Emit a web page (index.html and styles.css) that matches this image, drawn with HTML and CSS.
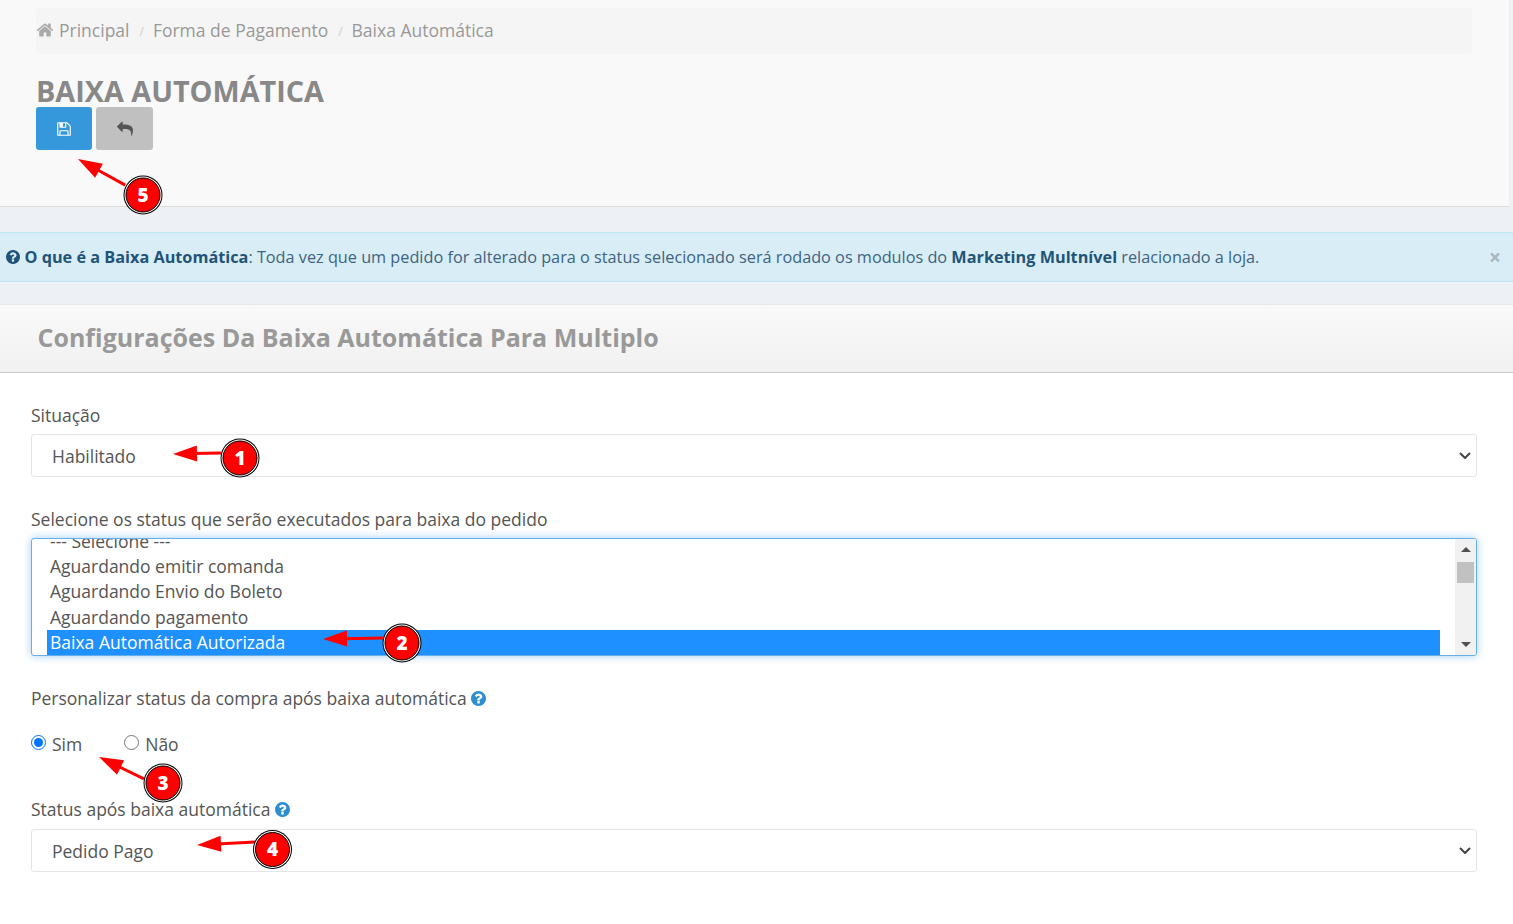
FILE: index.html
```html
<!DOCTYPE html>
<html lang="pt-BR">
<head>
<meta charset="utf-8">
<title>Baixa Automática</title>
<link rel="stylesheet" href="styles.css">
</head>
<body>
<svg class="sprite" width="0" height="0" aria-hidden="true">
  <symbol id="i-home" viewBox="0 0 1792 1792"><path d="M1472 992v480q0 26-19 45t-45 19h-384v-384h-256v384h-384q-26 0-45-19t-19-45v-480q0-1 .5-3t.5-3l575-474 575 474q1 2 1 6zm223-69l-62 74q-8 9-21 11h-3q-13 0-21-7l-692-577-692 577q-12 8-24 7-13-2-21-11l-62-74q-8-10-7-23.5t11-21.5l719-599q32-26 76-26t76 26l244 204v-195q0-14 9-23t23-9h192q14 0 23 9t9 23v408l219 182q10 8 11 21.5t-7 23.5z"/></symbol>
  <symbol id="i-save" viewBox="0 0 1792 1792"><path d="M512 1536h768v-384h-768v384zm896 0h128v-896q0-14-10-38.5t-20-34.5l-281-281q-10-10-34-20t-39-10v416q0 40-28 68t-68 28h-576q-40 0-68-28t-28-68v-416h-128v1280h128v-416q0-40 28-68t68-28h832q40 0 68 28t28 68v416zm-384-928v-320q0-13-9.5-22.5t-22.5-9.5h-192q-13 0-22.5 9.5t-9.5 22.5v320q0 13 9.5 22.5t22.5 9.5h192q13 0 22.5-9.5t9.5-22.5zm640 32v928q0 40-28 68t-68 28h-1344q-40 0-68-28t-28-68v-1344q0-40 28-68t68-28h928q40 0 88 20t76 48l280 280q28 28 48 76t20 88z"/></symbol>
  <symbol id="i-reply" viewBox="0 0 1792 1792"><path d="M1792 1120q0 166-127 451-3 7-10.5 24t-13.5 30-13 22q-12 17-28 17-15 0-23.5-10t-8.5-25q0-9 2.5-26.5t2.5-23.5q5-68 5-123 0-101-17.5-181t-48.5-138.5-80-101-105.5-69.5-133-42.5-154-21.5-175.5-6h-224v256q0 26-19 45t-45 19-45-19l-512-512q-19-19-19-45t19-45l512-512q19-19 45-19t45 19 19 45v256h224q713 0 875 403 53 134 53 333z"/></symbol>
  <symbol id="i-help" viewBox="128 128 1536 1536"><path d="M1024 1376v-192q0-14-9-23t-23-9h-192q-14 0-23 9t-9 23v192q0 14 9 23t23 9h192q14 0 23-9t9-23zm256-672q0-88-55.5-163t-138.5-116-170-41q-243 0-371 213-15 24 8 42l132 100q7 6 19 6 16 0 25-12 53-68 86-92 34-24 86-24 48 0 85.5 26t37.5 59q0 38-20 61t-68 45q-63 28-115.5 86.5t-52.5 125.5v36q0 14 9 23t23 9h192q14 0 23-9t9-23q0-19 21.5-49.5t54.5-49.5q32-18 49-28.5t46-35 44.5-48 28-60.5 12.5-81zm384 192q0 209-103 385.5t-279.5 279.5-385.5 103-385.5-103-279.5-279.5-103-385.5 103-385.5 279.5-279.5 385.5-103 385.5 103 279.5 279.5 103 385.5z"/></symbol>
</svg>

<header class="page-head">
  <nav class="breadcrumb">
    <svg class="icon-home"><use href="#i-home"/></svg>
    <span class="crumb">Principal</span>
    <span class="crumb-sep">/</span>
    <span class="crumb">Forma de Pagamento</span>
    <span class="crumb-sep">/</span>
    <span class="crumb">Baixa Automática</span>
  </nav>
  <h1 class="page-title">BAIXA AUTOMÁTICA</h1>
  <div class="actions">
    <button class="btn btn-save" type="button"><svg class="btn-icon"><use href="#i-save"/></svg></button>
    <button class="btn btn-back" type="button"><svg class="btn-icon"><use href="#i-reply"/></svg></button>
  </div>
</header>

<div class="alert">
  <svg class="alert-icon"><use href="#i-help"/></svg>
  <p class="alert-text"><strong>O que é a Baixa Automática</strong>: Toda vez que um pedido for alterado para o status selecionado será rodado os modulos do <strong>Marketing Multnível</strong> relacionado a loja.</p>
  <span class="alert-close">×</span>
</div>

<section class="panel">
  <div class="panel-heading"><h2 class="panel-title">Configurações Da Baixa Automática Para Multiplo</h2></div>
  <form class="panel-body">
    <div class="group group-situacao">
      <label class="field-label" for="situacao">Situação</label>
      <select class="field-select" id="situacao"><option>Habilitado</option><option>Desabilitado</option></select>
    </div>
    <div class="group group-status">
      <div class="field-label">Selecione os status que serão executados para baixa do pedido</div>
      <div class="listbox" role="listbox">
        <div class="list-options">
          <div class="list-option">--- Selecione ---</div>
          <div class="list-option">Aguardando emitir comanda</div>
          <div class="list-option">Aguardando Envio do Boleto</div>
          <div class="list-option">Aguardando pagamento</div>
          <div class="list-option is-selected">Baixa Automática Autorizada</div>
        </div>
        <div class="scrollbar">
          <span class="arrow-up"></span>
          <span class="thumb"></span>
          <span class="arrow-down"></span>
        </div>
      </div>
    </div>
    <div class="group group-custom">
      <div class="field-label">Personalizar status da compra após baixa automática <svg class="help"><use href="#i-help"/></svg></div>
      <div class="radios">
        <label class="radio"><input type="radio" name="custom" checked> Sim</label>
        <label class="radio"><input type="radio" name="custom"> Não</label>
      </div>
    </div>
    <div class="group group-after">
      <label class="field-label" for="apos">Status após baixa automática <svg class="help"><use href="#i-help"/></svg></label>
      <select class="field-select" id="apos"><option>Pedido Pago</option></select>
    </div>
  </form>
</section>

<svg class="annotations" width="1513" height="924" viewBox="0 0 1513 924">
  <g class="arrow" transform="translate(173 454) rotate(-1.2)"><line x1="20" y1="0" x2="48" y2="0"/><polygon points="0,0 24,-8 24,8"/></g>
  <g class="arrow" transform="translate(323 639) rotate(-1)"><line x1="20" y1="0" x2="60" y2="0"/><polygon points="0,0 24,-8 24,8"/></g>
  <g class="arrow" transform="translate(99 757) rotate(26)"><line x1="20" y1="0" x2="50" y2="0"/><polygon points="0,0 24,-8 24,8"/></g>
  <g class="arrow" transform="translate(197 845) rotate(-3)"><line x1="20" y1="0" x2="58" y2="0"/><polygon points="0,0 24,-8 24,8"/></g>
  <g class="arrow" transform="translate(78 159) rotate(29)"><line x1="20" y1="0" x2="54" y2="0"/><polygon points="0,0 24,-8 24,8"/></g>
  <g class="badge" transform="translate(240 458)"><circle class="b-outer" r="19.5"/><circle class="b-ring" r="18.5"/><circle class="b-fill" r="17"/><text y="6.5">1</text></g>
  <g class="badge" transform="translate(402 643)"><circle class="b-outer" r="19.5"/><circle class="b-ring" r="18.5"/><circle class="b-fill" r="17"/><text y="6.5">2</text></g>
  <g class="badge" transform="translate(163 783)"><circle class="b-outer" r="19.5"/><circle class="b-ring" r="18.5"/><circle class="b-fill" r="17"/><text y="6.5">3</text></g>
  <g class="badge" transform="translate(272.500 849.500)"><circle class="b-outer" r="19.5"/><circle class="b-ring" r="18.5"/><circle class="b-fill" r="17"/><text y="6.5">4</text></g>
  <g class="badge" transform="translate(143 195)"><circle class="b-outer" r="19.5"/><circle class="b-ring" r="18.5"/><circle class="b-fill" r="17"/><text y="6.5">5</text></g>
</svg>
</body>
</html>
```
FILE: styles.css
```css
* { box-sizing: border-box; }
html, body { height: 100%; }
body {
  margin: 0;
  position: relative;
  overflow: hidden;
  background: #edf0f5;
  font-family: "Open Sans", sans-serif;
  font-size: 17.5px;
  color: #555;
}
.sprite { position: absolute; }

.page-head {
  width: 1509px;
  height: 207px;
  padding: 8px 37px 0 36px;
  background: #f9f9f9;
  border-bottom: 1px solid #ddd;
}
.breadcrumb {
  display: flex;
  align-items: center;
  height: 46px;
  padding-bottom: 2px;
  background: #f5f5f5;
  border-radius: 4px;
  color: #999;
  font-size: 17.5px;
}
.icon-home { width: 18px; height: 18px; fill: #aaa; margin-right: 5px; }
.crumb-sep { margin: 2px 9px 0 10px; font-size: 12px; color: #ccc; }
.page-title {
  margin: 16px 0 0;
  height: 37px;
  font-size: 28.8px;
  line-height: 41px;
  font-weight: 700;
  color: #888;
}
.actions { display: flex; gap: 4px; }
.btn {
  display: flex;
  align-items: center;
  justify-content: center;
  height: 43px;
  padding: 0;
  border: 0;
  border-radius: 3px;
}
.btn-save { width: 56px; background: #3498db; fill: #fff; }
.btn-back { width: 57px; background: #c0c0c0; fill: #555; }
.btn-icon { width: 16px; height: 16px; }

.alert {
  display: flex;
  align-items: center;
  height: 50px;
  margin-top: 25px;
  padding: 0 12px 0 6px;
  background: #d9edf7;
  border-top: 1px solid #bce8f1;
  border-bottom: 1px solid #bce8f1;
  color: #3d6480;
  font-size: 16.25px;
}
.alert-icon { width: 14px; height: 14px; fill: #1f5478; margin-right: 4.5px; flex: none; }
.alert-text { margin: 0; flex: 1; }
.alert-text strong { color: #1f5478; }
.alert-close { font-size: 21px; font-weight: 700; line-height: 1; color: #a9b6bd; }

.panel { margin-top: 22px; background: #fff; height: 620px; }
.panel-heading {
  display: flex;
  align-items: center;
  height: 69px;
  padding: 0 37.5px 4px;
  background: linear-gradient(#f9f9f9, #f1f1f1);
  border-top: 1px solid #e8e8e8;
  border-bottom: 1px solid #ccc;
}
.panel-title {
  margin: 0;
  font-size: 25px;
  font-weight: 700;
  color: #999;
}
.panel-body { display: block; padding: 30px 36px 0 31px; }
.group-status { margin-top: 30px; }
.group-custom { margin-top: 30px; }
.group-after { margin-top: 41px; }

.field-label {
  display: block;
  height: 25px;
  margin-bottom: 6px;
  font-size: 17.5px;
  line-height: 25px;
  font-weight: 400;
  color: #555;
}
.group-after .field-label { margin-bottom: 7px; }
.field-select {
  display: block;
  width: 100%;
  height: 43px;
  padding: 0 40px 0 20px;
  appearance: none;
  background-color: #fff;
  background-image: url("data:image/svg+xml,%3Csvg xmlns='http://www.w3.org/2000/svg' width='12' height='7'%3E%3Cpath d='M1 1l5 5 5-5' fill='none' stroke='%23444' stroke-width='2'/%3E%3C/svg%3E");
  background-repeat: no-repeat;
  background-position: right 5px center;
  border: 1px solid #e5e5e5;
  border-radius: 3px;
  font-family: "Open Sans", sans-serif;
  font-size: 17.5px;
  color: #555;
}
.help { width: 15px; height: 15px; fill: #2e8fd0; vertical-align: -1px; }

.listbox {
  display: flex;
  height: 118px;
  overflow: hidden;
  background: #fff;
  border: 1px solid #66afe9;
  border-radius: 3px;
  box-shadow: 0 0 8px rgba(102, 175, 233, .6);
}
.list-options {
  width: 1393px;
  margin: -10px 0 0 15px;
  font-size: 17.5px;
  color: #555;
}
.list-option {
  height: 25.2px;
  padding-left: 3px;
  line-height: 25px;
  white-space: nowrap;
}
.list-option.is-selected { background: #1e90ff; color: #fff; }
.scrollbar {
  position: relative;
  flex: none;
  width: 21px;
  margin-left: auto;
  background: #f1f1f1;
}
.thumb {
  position: absolute;
  left: 2px;
  top: 23px;
  width: 17px;
  height: 21px;
  background: #c1c1c1;
}
.arrow-up, .arrow-down {
  position: absolute;
  left: 6px;
  width: 0;
  height: 0;
  border-left: 5px solid transparent;
  border-right: 5px solid transparent;
}
.arrow-up { top: 8px; border-bottom: 5px solid #505050; }
.arrow-down { bottom: 8px; border-top: 5px solid #505050; }

.radios { display: flex; gap: 42px; margin-top: 20px; }
.radio { display: flex; align-items: center; gap: 6px; height: 25px; font-size: 17.5px; color: #555; }
.radio input { width: 15px; height: 15px; margin: -3px 0 0; }

.annotations { position: absolute; left: 0; top: 0; pointer-events: none; }
.arrow line { stroke: #f00; stroke-width: 3; }
.arrow polygon { fill: #f00; }
.b-outer { fill: #000; }
.b-ring { fill: #fff; }
.b-fill { fill: #f00; stroke: #000; stroke-width: 1; }
.badge text {
  fill: #fff;
  font-family: "Open Sans", sans-serif;
  font-size: 19px;
  font-weight: 800;
  text-anchor: middle;
}
```
